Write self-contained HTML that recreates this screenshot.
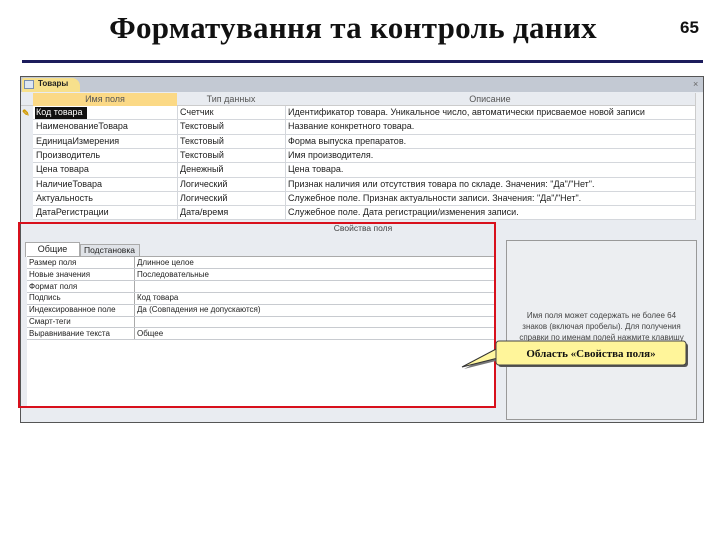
<!DOCTYPE html>
<html><head><meta charset="utf-8"><style>
*{margin:0;padding:0;box-sizing:border-box}
body{width:720px;height:540px;background:#fff;position:relative;overflow:hidden;font-family:"Liberation Sans",sans-serif}
.a{position:absolute}
.t{font-size:9px;color:#222;white-space:nowrap}
</style></head><body>
<div class="a" style="left:0;top:10px;width:706px;text-align:center;font-family:'Liberation Serif',serif;font-weight:bold;font-size:31px;color:#111;letter-spacing:0.3px">Форматування та контроль даних</div>
<div class="a" style="left:680px;top:18px;font-weight:bold;font-size:17px;color:#111">65</div>
<div class="a" style="left:22px;top:60px;width:681px;height:3px;background:#1c1c5c"></div>

<div class="a" style="left:20px;top:76px;width:684px;height:347px;background:#e9ecf1;border:1px solid #555"></div>
<div class="a" style="left:21px;top:77px;width:682px;height:15px;background:#c3c9d3"></div>
<div class="a" style="left:22px;top:78px;width:58px;height:14px;background:#f7e08c;border-radius:2px 8px 0 0"></div>
<div class="a" style="left:24px;top:80px;width:10px;height:9px;border:1px solid #7a8fb0;background:#dde6f3"></div>
<div class="a t" style="left:38px;top:79px;font-weight:bold;font-size:8px">Товары</div>
<div class="a t" style="left:693px;top:79px;color:#666">×</div>
<div class="a" style="left:21px;top:93px;width:674px;height:13px;background:#e8ebf0;border-bottom:1px solid #ccc"></div>
<div class="a" style="left:33px;top:93px;width:144px;height:13px;background:#fbd986"></div>
<div class="a t" style="left:33px;top:94px;width:144px;text-align:center;color:#555">Имя поля</div>
<div class="a t" style="left:177px;top:94px;width:108px;text-align:center;color:#555">Тип данных</div>
<div class="a t" style="left:285px;top:94px;width:410px;text-align:center;color:#555">Описание</div>
<div class="a" style="left:695px;top:93px;width:8px;height:127px;background:#eef0f3;border-left:1px solid #ccc"></div>
<div class="a" style="left:21px;top:106px;width:674px;height:114px;background:#fff"></div>
<div class="a" style="left:21px;top:106px;width:12px;height:114px;background:#e8ebf0"></div>
<div class="a" style="left:35px;top:107px;width:52px;height:12px;background:#111"></div>
<div id="rows"></div>
<div class="a" style="left:22px;top:108px;color:#d29a00;font-size:9px;font-weight:bold">✎</div>

<div class="a t" style="left:300px;top:223px;width:126px;text-align:center;color:#444;font-size:8.5px">Свойства поля</div>
<div class="a" style="left:25px;top:242px;width:55px;height:15px;background:#fff;border:1px solid #aaa;border-bottom:none"></div>
<div class="a t" style="left:25px;top:244px;width:55px;text-align:center">Общие</div>
<div class="a" style="left:80px;top:244px;width:60px;height:13px;background:#e0e3e8;border:1px solid #aaa;border-bottom:none"></div>
<div class="a t" style="left:84px;top:245px;font-size:8.5px">Подстановка</div>
<div class="a" style="left:27px;top:256px;width:468px;height:150px;background:#fff;border-top:1px solid #aaa"></div>
<div class="a" style="left:134px;top:257px;width:1px;height:83px;background:#aaa"></div>
<div id="props"></div>
<div class="a" style="left:18px;top:222px;width:478px;height:186px;border:2px solid #d8101c"></div>

<div class="a" style="left:506px;top:240px;width:191px;height:180px;background:#eceef1;border:1px solid #999"></div>
<div class="a t" style="left:506px;top:310px;width:191px;text-align:center;font-size:8px;line-height:11px;color:#444;white-space:normal;padding:0 12px">Имя поля может содержать не более 64 знаков (включая пробелы). Для получения справки по именам полей нажмите клавишу</div>

<svg class="a" style="left:460px;top:340px" width="240" height="40">
<polygon points="4,29 40,20 40,10" fill="#777"/>
<polygon points="2,27 38,18 38,8" fill="#fff7a0" stroke="#333" stroke-width="1"/>
<rect x="38" y="3" width="190" height="24" rx="3" fill="#555"/>
<rect x="36" y="1" width="190" height="24" rx="3" fill="#fff59a" stroke="#444"/>
<text x="131" y="17" text-anchor="middle" font-family="Liberation Serif" font-weight="bold" font-size="11" fill="#111">Область «Свойства поля»</text>
</svg>

<script>
var r=[["Код товара","Счетчик","Идентификатор товара. Уникальное число, автоматически присваемое новой записи"],
["НаименованиеТовара","Текстовый","Название конкретного товара."],
["ЕдиницаИзмерения","Текстовый","Форма выпуска препаратов."],
["Производитель","Текстовый","Имя производителя."],
["Цена товара","Денежный","Цена товара."],
["НаличиеТовара","Логический","Признак наличия или отсутствия товара по складе. Значения: \"Да\"/\"Нет\"."],
["Актуальность","Логический","Служебное поле. Признак актуальности записи. Значения: \"Да\"/\"Нет\"."],
["ДатаРегистрации","Дата/время","Служебное поле. Дата регистрации/изменения записи."]];
var h="";
r.forEach(function(x,i){var y=106+i*14.3;
h+='<div class="a" style="left:33px;top:'+(y+13.3)+'px;width:662px;height:1px;background:#d4d7dc"></div>';
h+='<div class="a t" style="left:36px;top:'+(y+1)+'px;'+(i==0?'color:#fff;':'')+'">'+x[0]+'</div>';
h+='<div class="a t" style="left:180px;top:'+(y+1)+'px">'+x[1]+'</div>';
h+='<div class="a t" style="left:288px;top:'+(y+1)+'px;width:406px;overflow:hidden">'+x[2]+'</div>';});
h+='<div class="a" style="left:177px;top:106px;width:1px;height:114px;background:#d4d7dc"></div><div class="a" style="left:285px;top:106px;width:1px;height:114px;background:#d4d7dc"></div>';
document.getElementById("rows").innerHTML=h;
var p=[["Размер поля","Длинное целое"],["Новые значения","Последовательные"],["Формат поля",""],["Подпись","Код товара"],["Индексированное поле","Да (Совпадения не допускаются)"],["Смарт-теги",""],["Выравнивание текста","Общее"]];
h="";p.forEach(function(x,i){var y=257+i*11.8;
h+='<div class="a" style="left:27px;top:'+(y+11.3)+'px;width:468px;height:1px;background:#c8cbd0"></div>';
h+='<div class="a t" style="left:29px;top:'+(y+1)+'px;font-size:8px">'+x[0]+'</div><div class="a t" style="left:137px;top:'+(y+1)+'px;font-size:8px">'+x[1]+'</div>';});
document.getElementById("props").innerHTML=h;
</script>
</body></html>
